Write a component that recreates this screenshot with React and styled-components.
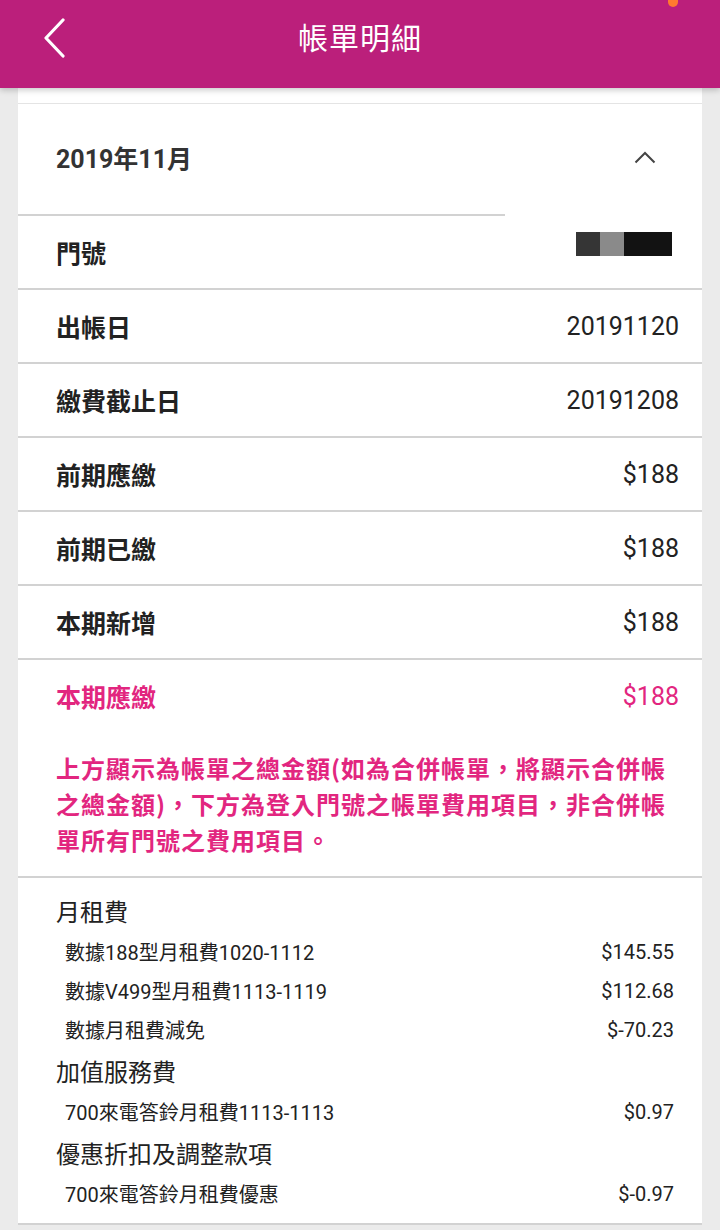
import React from "react";
import styled, { createGlobalStyle } from "styled-components";

const Global = createGlobalStyle`
  html, body { margin: 0; padding: 0; background: #ebebeb; }
  body { font-family: Roboto, "Noto Sans CJK TC", sans-serif; -webkit-font-smoothing: antialiased; }
  * { box-sizing: border-box; }
`;

const Page = styled.div`
  width: 720px;
  min-height: 1230px;
  background: #ebebeb;
  position: relative;
  overflow: hidden;
`;

const TopBar = styled.header`
  position: relative;
  z-index: 2;
  height: 88px;
  background: #bb1f7b;
  display: flex;
  align-items: center;
  justify-content: center;
  box-shadow: 0 2px 6px rgba(0, 0, 0, 0.22);
`;

const BackButton = styled.button`
  position: absolute;
  left: 38px;
  top: 15px;
  width: 32px;
  height: 46px;
  padding: 0;
  border: 0;
  background: transparent;
  display: flex;
  align-items: center;
  justify-content: center;
`;

const Title = styled.h1`
  margin: 0 0 16px;
  font-family: "Noto Sans CJK TC", sans-serif;
  font-weight: 400;
  font-size: 30px;
  color: #ffffff;
  letter-spacing: 1px;
`;

const StatusDot = styled.span`
  position: absolute;
  top: -5px;
  left: 668px;
  width: 10px;
  height: 12px;
  border-radius: 5px;
  background: #ff7a2f;
`;

const Card = styled.main`
  margin: 0 18px;
  background: #ffffff;
`;

const TopStrip = styled.div`
  height: 16px;
  border-bottom: 1px solid #e4e4e4;
`;

const MonthHeader = styled.div`
  position: relative;
  height: 110px;
  padding: 0 46px 0 38px;
  display: flex;
  align-items: center;
  justify-content: space-between;
  &::after {
    content: "";
    position: absolute;
    left: 0;
    bottom: -2px;
    width: 487px;
    height: 2px;
    background: #d2d2d2;
  }
`;

const MonthTitle = styled.span`
  font-family: Roboto, "Noto Sans CJK TC", sans-serif;
  font-weight: 700;
  font-size: 25px;
  color: #333333;
  margin-top: -4px;
`;

const Chevron = styled.svg`
  margin-top: -4px;
`;

const Row = styled.div`
  height: 74px;
  padding: 0 23px 0 38px;
  border-top: ${(p) => (p.$noBorder ? "2px solid transparent" : "2px solid #d2d2d2")};
  display: flex;
  align-items: center;
  justify-content: space-between;
  color: ${(p) => (p.$accent ? "#e2267f" : "#222222")};
`;

const Label = styled.span`
  font-family: "Noto Sans CJK TC", sans-serif;
  font-weight: 700;
  font-size: 25px;
  margin-top: -1px;
`;

const Value = styled.span`
  font-family: Roboto, "Noto Sans CJK TC", sans-serif;
  font-size: 25px;
`;

const Masked = styled.div`
  display: flex;
  height: 24px;
  margin-right: 7px;
  margin-top: -16px;
`;

const MaskBlock = styled.span`
  width: ${(p) => p.$w}px;
  height: 24px;
  background: ${(p) => p.$c};
`;

const Note = styled.p`
  margin: 0;
  padding: 18px 24px 18px 38px;
  font-family: "Noto Sans CJK TC", sans-serif;
  font-weight: 700;
  font-size: 24px;
  letter-spacing: 1px;
  line-height: 36px;
  color: #e2267f;
`;

const Charges = styled.section`
  border-top: 2px solid #d2d2d2;
  border-bottom: 2px solid #d2d2d2;
  padding: 11px 28px 10px 38px;
`;

const Category = styled.div`
  height: 43px;
  display: flex;
  align-items: center;
  font-family: "Noto Sans CJK TC", sans-serif;
  font-size: 24px;
  color: #222222;
`;

const Item = styled.div`
  height: 39px;
  padding-left: 9px;
  display: flex;
  align-items: center;
  justify-content: space-between;
  font-family: Roboto, "Noto Sans CJK TC", sans-serif;
  font-size: 20px;
  color: #222222;
`;

const rows = [
  { label: "出帳日", value: "20191120" },
  { label: "繳費截止日", value: "20191208" },
  { label: "前期應繳", value: "$188" },
  { label: "前期已繳", value: "$188" },
  { label: "本期新增", value: "$188" },
];

const charges = [
  {
    name: "月租費",
    items: [
      ["數據188型月租費1020-1112", "$145.55"],
      ["數據V499型月租費1113-1119", "$112.68"],
      ["數據月租費減免", "$-70.23"],
    ],
  },
  { name: "加值服務費", items: [["700來電答鈴月租費1113-1113", "$0.97"]] },
  { name: "優惠折扣及調整款項", items: [["700來電答鈴月租費優惠", "$-0.97"]] },
];

export default function App() {
  return (
    <Page>
      <Global />
      <TopBar>
        <StatusDot />
        <BackButton aria-label="back">
          <svg width="26" height="40" viewBox="0 0 26 40">
            <path d="M22 2 L5 20 L22 38" fill="none" stroke="#ffffff" strokeWidth="3.2" strokeLinecap="round" strokeLinejoin="round" />
          </svg>
        </BackButton>
        <Title>帳單明細</Title>
      </TopBar>
      <Card>
        <TopStrip />
        <MonthHeader>
          <MonthTitle>2019年11月</MonthTitle>
          <Chevron width="22" height="13" viewBox="0 0 22 13">
            <path d="M1.5 11.5 L11 2 L20.5 11.5" fill="none" stroke="#444" strokeWidth="2" />
          </Chevron>
        </MonthHeader>
        <Row $noBorder>
          <Label>門號</Label>
          <Masked>
            <MaskBlock $w={24} $c="#353535" />
            <MaskBlock $w={24} $c="#8a8a8a" />
            <MaskBlock $w={48} $c="#121212" />
          </Masked>
        </Row>
        {rows.map((r) => (
          <Row key={r.label}>
            <Label>{r.label}</Label>
            <Value>{r.value}</Value>
          </Row>
        ))}
        <Row $accent>
          <Label>本期應繳</Label>
          <Value>$188</Value>
        </Row>
        <Note>
          上方顯示為帳單之總金額(如為合併帳單，將顯示合併帳之總金額)，下方為登入門號之帳單費用項目，非合併帳單所有門號之費用項目。
        </Note>
        <Charges>
          {charges.map((c) => (
            <React.Fragment key={c.name}>
              <Category>{c.name}</Category>
              {c.items.map(([n, v]) => (
                <Item key={n}>
                  <span>{n}</span>
                  <span>{v}</span>
                </Item>
              ))}
            </React.Fragment>
          ))}
        </Charges>
      </Card>
    </Page>
  );
}
